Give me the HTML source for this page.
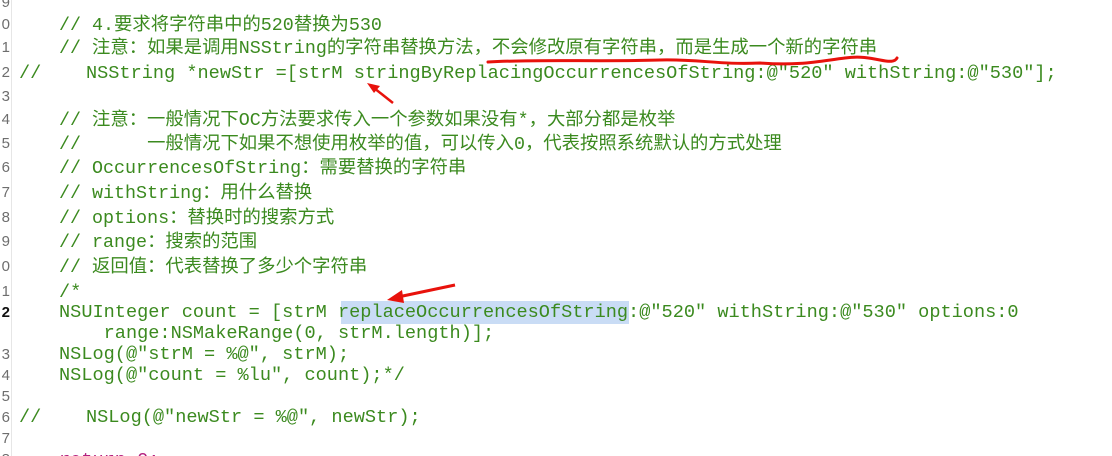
<!DOCTYPE html>
<html><head><meta charset="utf-8"><style>
html,body{margin:0;padding:0;background:#fff;width:1112px;height:456px;overflow:hidden;position:relative}
.l{position:absolute;left:0;white-space:pre;font-family:"Liberation Mono","Noto Sans CJK SC",monospace;font-size:18.6px;line-height:22px;color:#3b8a1f}
.c{font-size:18.35px}
.n{position:absolute;left:-4px;width:14px;text-align:right;font-family:"Liberation Sans",sans-serif;font-size:15px;color:#6e6e6e;line-height:22px}
.g{position:absolute;left:11px;top:0;width:1px;height:456px;background:#e6e6e6}
.hl{position:absolute;left:341px;top:301px;width:288px;height:23px;background:#c9dcf5}
</style></head><body>
<div class="g"></div>
<div class="hl"></div>
<div class="n" style="top:-8px">9</div>
<div class="n" style="top:14px">0</div>
<div class="n" style="top:37px">1</div>
<div class="n" style="top:62px">2</div>
<div class="n" style="top:86px">3</div>
<div class="n" style="top:109px">4</div>
<div class="n" style="top:133px">5</div>
<div class="n" style="top:157px">6</div>
<div class="n" style="top:182px">7</div>
<div class="n" style="top:207px">8</div>
<div class="n" style="top:231px">9</div>
<div class="n" style="top:256px">0</div>
<div class="n" style="top:281px">1</div>
<div class="n" style="top:302px;color:#111;font-weight:bold">2</div>
<div class="n" style="top:344px">3</div>
<div class="n" style="top:365px">4</div>
<div class="n" style="top:386px">5</div>
<div class="n" style="top:407px">6</div>
<div class="n" style="top:428px">7</div>
<div class="n" style="top:449px">8</div>

<div class="l c" style="top:15px;left:59px">// 4.要求将字符串中的520替换为530</div>
<div class="l c" style="top:38px;left:59px">// 注意：如果是调用NSString的字符串替换方法，不会修改原有字符串，而是生成一个新的字符串</div>
<div class="l" style="top:63px;left:19px">//    NSString *newStr =[strM stringByReplacingOccurrencesOfString:@"520" withString:@"530"];</div>
<div class="l c" style="top:110px;left:59px">// 注意：一般情况下OC方法要求传入一个参数如果没有*，大部分都是枚举</div>
<div class="l c" style="top:134px;left:59px">//      一般情况下如果不想使用枚举的值，可以传入0，代表按照系统默认的方式处理</div>
<div class="l c" style="top:158px;left:59px">// OccurrencesOfString：需要替换的字符串</div>
<div class="l c" style="top:183px;left:59px">// withString：用什么替换</div>
<div class="l c" style="top:208px;left:59px">// options：替换时的搜索方式</div>
<div class="l c" style="top:232px;left:59px">// range：搜索的范围</div>
<div class="l c" style="top:257px;left:59px">// 返回值：代表替换了多少个字符串</div>
<div class="l" style="top:282px;left:59px">/*</div>
<div class="l" style="top:302px;left:59px">NSUInteger count = [strM replaceOccurrencesOfString:@"520" withString:@"530" options:0</div>
<div class="l" style="top:323px;left:59px">    range:NSMakeRange(0, strM.length)];</div>
<div class="l" style="top:344px;left:59px">NSLog(@"strM = %@", strM);</div>
<div class="l" style="top:365px;left:59px">NSLog(@"count = %lu", count);*/</div>
<div class="l" style="top:407px;left:19px">//    NSLog(@"newStr = %@", newStr);</div>
<div class="l" style="top:450px;left:59px;color:#b3207f">return 0;</div>

<svg width="1112" height="456" style="position:absolute;left:0;top:0">
<path d="M488 62 C540 59,600 62,660 60 C700 59,720 65,760 63 C800 66,820 61,845 58 C860 56,870 58,880 60 C890 62,895 62,897 58" stroke="#e8120c" stroke-width="3" fill="none" stroke-linecap="round"/>
<line x1="393" y1="103" x2="374" y2="88" stroke="#e8120c" stroke-width="2.5"/>
<polygon points="367,83 380,86 374,93" fill="#e8120c"/>
<line x1="455" y1="285" x2="398" y2="297" stroke="#e8120c" stroke-width="3"/>
<polygon points="387,300 402,290 404,303" fill="#e8120c"/>
</svg>
</body></html>
